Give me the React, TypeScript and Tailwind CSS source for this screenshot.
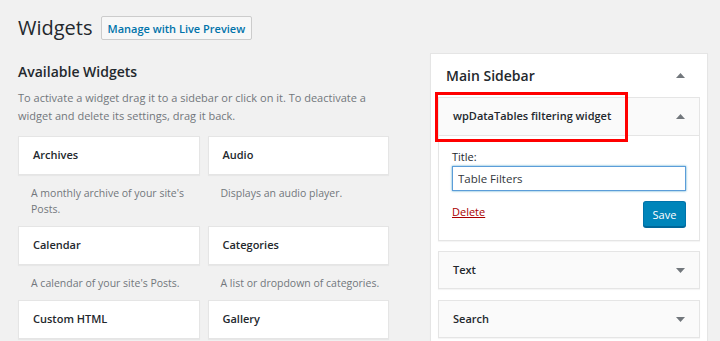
import React from 'react';

const available = [
  { name: 'Archives', desc: "A monthly archive of your site's Posts." },
  { name: 'Audio', desc: 'Displays an audio player.' },
  { name: 'Calendar', desc: "A calendar of your site's Posts." },
  { name: 'Categories', desc: 'A list or dropdown of categories.' },
  { name: 'Custom HTML', desc: '' },
  { name: 'Gallery', desc: '' },
];

const Arrow: React.FC<{ up?: boolean }> = ({ up }) => (
  <svg width="9" height="5" viewBox="0 0 9 5" className="text-[#72777c]">
    {up ? <path d="M0 5 L4.5 0 L9 5 Z" fill="currentColor" /> : <path d="M0 0 L4.5 5 L9 0 Z" fill="currentColor" />}
  </svg>
);

const App: React.FC = () => {
  return (
    <div className="h-screen bg-[#f1f1f1] font-['Open_Sans',sans-serif] text-[#23282d] overflow-hidden">
      {/* Header */}
      <div className="flex items-center pl-[18px] pt-[16px] h-[40px]">
        <h1 className="text-[20px] leading-[24px] font-normal">Widgets</h1>
        <button className="ml-[8px] h-[24px] px-[6px] border border-[#ccc] bg-[#f7f7f7] rounded-[2px] text-[11px] font-semibold text-[#0073aa] leading-none">
          Manage with Live Preview
        </button>
      </div>

      <div className="flex mt-[13px]">
        {/* Available widgets */}
        <div className="w-[371px] ml-[18px] shrink-0">
          <h2 className="mt-[9px] text-[14px] leading-[20px] font-semibold">Available Widgets</h2>
          <p className="mt-[7px] text-[11px] leading-[18px] text-[#72777c]">
            To activate a widget drag it to a sidebar or click on it. To deactivate a widget and delete its settings, drag it back.
          </p>
          <div className="mt-[11px] grid grid-cols-2 gap-x-[8px]">
            {available.map((w) => (
              <div key={w.name} className="flex flex-col">
                <div className="h-[39px] bg-white border border-[#e5e5e5] shadow-[0_1px_1px_rgba(0,0,0,0.04)] flex items-center pl-[14px] text-[11px] font-semibold">
                  {w.name}
                </div>
                {w.desc && (
                  <div className="pt-[10px] pb-[9px] pl-[13px] text-[10.5px] leading-[16px] text-[#72777c]">{w.desc}</div>
                )}
              </div>
            ))}
          </div>
        </div>

        {/* Main sidebar */}
        <div className="w-[278px] ml-[41px] shrink-0 h-[300px] bg-white border border-[#e5e5e5] shadow-[0_1px_1px_rgba(0,0,0,0.04)]">
          <div className="h-[43px] flex items-center justify-between pl-[15px] pr-[22px]">
            <h3 className="text-[14px] font-semibold">Main Sidebar</h3>
            <Arrow up />
          </div>
          <div className="px-[7px]">
            {/* open widget */}
            <div className="mb-[10px] relative">
              <div className="h-[39px] bg-[#fafafa] border border-[#e5e5e5] flex items-center justify-between pl-[14px] pr-[14px] text-[11px] font-semibold">
                <span>wpDataTables filtering widget</span>
                <Arrow up />
              </div>
              <div className="absolute left-[-3px] top-[-5px] w-[193px] h-[50px] border-[3px] border-[#ff0000]" />
              <div className="bg-white border border-t-0 border-[#e5e5e5] px-[13px] pt-[12px] pb-[13px] shadow-[0_1px_1px_rgba(0,0,0,0.04)]">
                <label className="block text-[11px] leading-[18px]">Title:</label>
                <input
                  readOnly
                  value="Table Filters"
                  className="block w-full h-[25px] px-[5px] border border-[#5b9dd9] shadow-[0_0_2px_rgba(30,140,190,0.8)] text-[11.5px] text-[#32373c] outline-none"
                />
                <div className="mt-[10px] flex justify-between items-start">
                  <span className="mt-[2px] text-[11px] leading-[18px] text-[#a00] underline">Delete</span>
                  <button className="h-[26px] w-[43px] bg-[#0085ba] border border-[#0073aa] border-b-[#006799] rounded-[3px] shadow-[0_1px_0_#006799] text-white text-[11px] leading-none">
                    Save
                  </button>
                </div>
              </div>
            </div>
            {['Text', 'Search'].map((t) => (
              <div key={t} className="mb-[11px] h-[38px] bg-[#fafafa] border border-[#e5e5e5] shadow-[0_1px_1px_rgba(0,0,0,0.04)] flex items-center justify-between pl-[14px] pr-[14px] text-[11px] font-semibold">
                <span>{t}</span>
                <Arrow />
              </div>
            ))}
          </div>
        </div>
      </div>
    </div>
  );
};

export default App;
